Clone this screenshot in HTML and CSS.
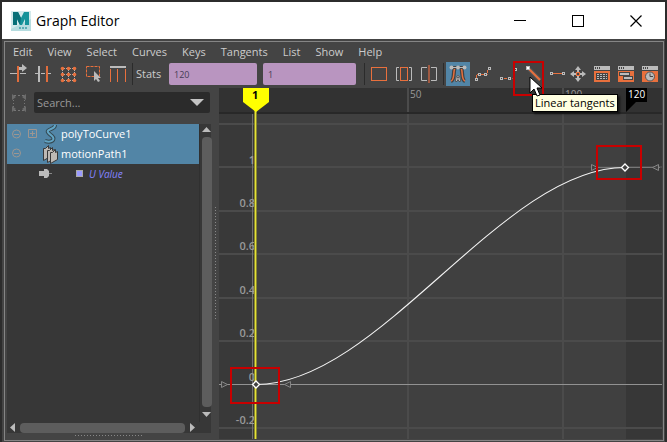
FILE: index.html
```html
<!DOCTYPE html>
<html lang="en">
<head>
<meta charset="utf-8">
<title>Graph Editor</title>
<link rel="stylesheet" href="styles.css">
</head>
<body>
<div class="window">
  <header class="titlebar">
    <svg class="app-logo" width="20" height="20" viewBox="0 0 20 20"><rect width="20" height="20" fill="#b5dcdf"/><path d="M0 0h20v8L0 18z" fill="#d3eaec"/><path d="M2 1h5l3 6 3-6h5v13h-4V8l-3 6H9L6 8v6H2z" fill="#14939a"/><path d="M2 1h5l3 6-1 7-3-6v6H2z" fill="#087078"/><path d="M8 17h9" stroke="#5aaeb5" stroke-width="2" stroke-dasharray="2 1"/></svg>
    <h1>Graph Editor</h1>
    <button class="win-btn" aria-label="Minimize"><svg width="14" height="14"><path d="M1 6.500h12" stroke="#000"/></svg></button>
    <button class="win-btn" aria-label="Maximize"><svg width="14" height="14"><rect x="1.500" y="1.500" width="11" height="11" fill="none" stroke="#000"/></svg></button>
    <button class="win-btn" aria-label="Close"><svg width="14" height="14"><path d="M1.500 1.500l11 11m0-11l-11 11" stroke="#000" stroke-width="1.200"/></svg></button>
  </header>
  <div class="client">
    <nav class="menu">
      <button>Edit</button><button>View</button><button>Select</button><button>Curves</button><button>Keys</button><button>Tangents</button><button>List</button><button>Show</button><button>Help</button>
    </nav>
    <div class="toolbar">
      <div class="tools">
        <button class="tool" aria-label="Move nearest picked key"><svg viewBox="0 0 24 24"><path d="M4 11.500h7m3 0h6" stroke="#bbb"/><path d="M12 4v16" stroke="#e06c3c" stroke-width="2"/><path d="M13 5h3V2l5 4-5 4V8h-3z" fill="#bbb"/></svg></button>
        <button class="tool" aria-label="Insert keys"><svg viewBox="0 0 24 24"><path d="M4 11.500h3m3 0h4m2 0h4" stroke="#bbb"/><path d="M8 4v16" stroke="#bbb" stroke-width="2"/><path d="M16 4v16" stroke="#e06c3c" stroke-width="2"/></svg></button>
        <button class="tool" aria-label="Lattice deform keys"><svg viewBox="0 0 24 24"><path d="M6 6.500h12M6 12.500h12M6 18.500h12M6.500 6v12M12.500 6v12M18.500 6v12" stroke="#bbb" stroke-dasharray="1 1"/><g fill="#e8703d"><circle cx="6.500" cy="6.500" r="1.800"/><circle cx="12.500" cy="6.500" r="1.800"/><circle cx="18.500" cy="6.500" r="1.800"/><circle cx="6.500" cy="12.500" r="1.800"/><circle cx="12.500" cy="12.500" r="1.800"/><circle cx="18.500" cy="12.500" r="1.800"/><circle cx="6.500" cy="18.500" r="1.800"/><circle cx="12.500" cy="18.500" r="1.800"/><circle cx="18.500" cy="18.500" r="1.800"/></g></svg></button>
        <button class="tool" aria-label="Region select"><svg viewBox="0 0 24 24"><rect x="5.500" y="4.500" width="13" height="10" fill="none" stroke="#e8703d" stroke-dasharray="3 1"/><path d="M13 9v10l2-2 2 3 2-1-2-3h3z" fill="#bbb"/></svg></button>
        <button class="tool" aria-label="Retime"><svg viewBox="0 0 24 24"><path d="M4 5h16" stroke="#bbb" stroke-width="2"/><path d="M4.500 7v13M11.500 7v13M19.500 7v13" stroke="#e8703d"/></svg></button>
      </div>
      <span class="sep"></span>
      <label class="stats" for="frame">Stats</label>
      <input class="stat" id="frame" value="120">
      <input class="stat" aria-label="Key value" value="1">
      <span class="sep sep-wide"></span>
      <div class="tools">
        <button class="tool" aria-label="Frame all"><svg viewBox="0 0 24 24"><rect x="4.500" y="5.500" width="15" height="13" fill="none" stroke="#e8703d"/></svg></button>
        <button class="tool" aria-label="Frame playback range"><svg viewBox="0 0 24 24"><path d="M7 5.500H4.500v13H7M17 5.500h2.500v13H17" fill="none" stroke="#bbb"/><rect x="8.500" y="5.500" width="7" height="13" fill="none" stroke="#e8703d"/></svg></button>
        <button class="tool" aria-label="Center current time"><svg viewBox="0 0 24 24"><path d="M10 5.500H4.500v13H10M14 5.500h5.500v13H14" fill="none" stroke="#bbb"/><path d="M12 3v18" stroke="#a05a42" stroke-width="2"/></svg></button>
      </div>
      <span class="sep sep-mid"></span>
      <div class="tools">
        <button class="tool active" aria-label="Auto tangents"><svg viewBox="0 0 24 24"><path d="M5 19c4-1 2-11 4-13M19 19c-4-1-2-11-4-13" fill="none" stroke="#424242" stroke-width="4"/><path d="M5 19c4-1 2-11 4-13M19 19c-4-1-2-11-4-13" fill="none" stroke="#e8703d" stroke-width="1.500"/><path d="M5 5.500h14" stroke="#444" stroke-width="3"/><path d="M5 5.500h14" stroke="#bbb"/><g fill="#bbb"><circle cx="5.500" cy="5.500" r="2"/><circle cx="12" cy="5.500" r="2"/><circle cx="18.500" cy="5.500" r="2"/></g><path d="M9.500 19.500c0-8 5-8 5 0h-1.500l-1-2-1 2z" fill="#bbb" stroke="#555"/><circle cx="12" cy="15.500" r="1" fill="#555"/></svg></button>
        <button class="tool" aria-label="Spline tangents"><svg viewBox="0 0 24 24"><path d="M5.500 16v-3.500h11V8" fill="none" stroke="#e8703d" stroke-dasharray="3 1"/><g fill="#444" stroke="#bbb"><rect x="4.500" y="16.500" width="2" height="2"/><rect x="7.500" y="11.500" width="2" height="2"/><rect x="13.500" y="11.500" width="2" height="2"/><rect x="17.500" y="5.500" width="2" height="2"/></g></svg></button>
        <button class="tool" aria-label="Clamped tangents"><svg viewBox="0 0 24 24"><path d="M4 16.500h12.500M17.500 15V8" fill="none" stroke="#e8703d" stroke-dasharray="3 1"/><g fill="#444" stroke="#bbb"><rect x="4.500" y="15.500" width="2" height="2"/><rect x="12.500" y="15.500" width="2" height="2"/><rect x="18.500" y="6.500" width="2" height="2"/></g></svg></button>
        <button class="tool" aria-label="Linear tangents"><svg viewBox="0 0 24 24"><path d="M8 7l11 11" stroke="#555" stroke-width="4"/><path d="M8 7l11 11" stroke="#e8703d" stroke-width="2"/><rect x="5.500" y="4.500" width="3" height="3" fill="#fff" stroke="#bbb"/></svg>
          <svg class="cursor" width="14" height="21" viewBox="0 0 14 21"><path d="M1 1v16l4-4 3 7 3-1-3-7h5z" fill="#fff" stroke="#000"/></svg>
          <span class="tooltip" role="tooltip">Linear tangents</span>
          <span class="mark mark-tool"></span>
        </button>
        <button class="tool narrow" aria-label="Flat tangents"><svg viewBox="0 0 20 24"><path d="M7 11.500h9" stroke="#e8703d"/><g fill="#444" stroke="#bbb"><rect x="4.500" y="10.500" width="2" height="2"/><rect x="16.500" y="10.500" width="2" height="2"/></g></svg></button>
      </div>
      <div class="tools tight">
        <button class="tool" aria-label="Break tangents"><svg viewBox="0 0 24 24"><path d="M12 4l3 4h-2v2h-2V8H9zM12 20l3-4h-2v-2h-2v2H9zM4 12l4-3v2h2v2H8v2zM20 12l-4-3v2h-2v2h2v2z" fill="#bbb"/><rect x="10.500" y="10.500" width="3" height="3" fill="#444" stroke="#e8703d"/></svg></button>
        <button class="tool" aria-label="Dope sheet"><svg viewBox="0 0 24 24"><path d="M4 4h16v4H4z" fill="#bbb"/><path d="M5 6h6" stroke="#444" stroke-width="2" stroke-dasharray="1 1"/><path d="M4 9h16v11H4z" fill="#e8703d"/><path d="M6 11h12v7H6z" fill="#444"/><path d="M7 12.500h10M7 14.500h10M7 16.500h10" stroke="#bbb" stroke-dasharray="2 1"/></svg></button>
        <button class="tool" aria-label="Trax editor"><svg viewBox="0 0 24 24"><path d="M4 4h16v4H4z" fill="#bbb"/><path d="M5 6h6" stroke="#444" stroke-width="2" stroke-dasharray="1 1"/><path d="M4 9h16v11H4z" fill="#e8703d"/><g fill="#bbb" stroke="#444"><rect x="5.500" y="10.500" width="10" height="3"/><rect x="9.500" y="14.500" width="9" height="3"/></g></svg></button>
        <button class="tool" aria-label="Time editor"><svg viewBox="0 0 24 24"><path d="M4 4h16v4H4z" fill="#bbb"/><path d="M5 6h6" stroke="#444" stroke-width="2" stroke-dasharray="1 1"/><path d="M4 9h16v11H4z" fill="#e8703d"/><circle cx="12" cy="14.500" r="4.500" fill="#bbb" stroke="#555"/><path d="M12 11.500v3h3" fill="none" stroke="#444"/></svg></button>
      </div>
    </div>
    <main class="main">
      <section class="outliner">
        <div class="search-row">
          <svg width="16" height="18" viewBox="0 0 16 18" fill="none" stroke="#777"><path d="M3 1.500h10M3 16.500h10" stroke-dasharray="2 2"/><path d="M2.500 3v12M13.500 3v12" stroke-dasharray="1 2"/><path d="M1 0l4 3-4 3zM15 0v6l-4-3zM1 12l4 3-4 3zM15 12v6l-4-3z" fill="#6c6c6c" stroke="none"/></svg>
          <div class="search"><input aria-label="Search" placeholder="Search..."><button aria-label="Search options"><svg width="14" height="7"><path d="M0 0h14L7 7z" fill="#c4c4c4"/></svg></button></div>
        </div>
        <div class="tree-box">
          <ul class="tree">
            <li class="row selected">
              <svg width="54" height="20" fill="none"><g stroke="#9d9691"><circle cx="9.500" cy="10" r="4"/><path d="M7 10.500h5M21.500 5.500h8v8h-8zM23 9.500h5M25.500 7v5"/></g><path d="M38 17c6 2 11-1 7-5-5-4-6-5-1-7 3-1 4-2 4-4" stroke="#354850" stroke-width="4"/><path d="M38 17c6 2 11-1 7-5-5-4-6-5-1-7 3-1 4-2 4-4" stroke="#62a5c5" stroke-width="2"/></svg>
              <span>polyToCurve1</span>
            </li>
            <li class="row selected">
              <svg width="54" height="20" fill="none"><g stroke="#9d9691"><circle cx="9.500" cy="9" r="4"/><path d="M7 9.500h5"/></g><g fill="#bdb9b4" stroke="#383838"><path d="M36.500 4.500h2l3-3v3l2-1v9l-7 4z"/><path d="M40.500 6.500h2l3-3v3l2-1v9l-7 4z"/><path d="M43.500 8.500h2l3-3v3l2-1v8l-7 4z"/></g></svg>
              <span>motionPath1</span>
            </li>
            <li class="row channel">
              <svg width="82" height="20"><path d="M32 7h5V5h3l2 2v5l-2 2h-3v-2h-5zM42 9h3v1h-3z" fill="#bbb"/><path d="M42 9.500h3" stroke="#888"/><rect x="69.500" y="6.500" width="6" height="6" fill="#9a9aff" stroke="#aaa"/></svg>
              <span>U Value</span>
            </li>
          </ul>
          <div class="vscroll"><svg width="9" height="5"><path d="M0 5l4.500-5L9 5z" fill="#bbb"/></svg><span class="thumb"></span><svg width="9" height="5"><path d="M0 0l4.500 5L9 0z" fill="#bbb"/></svg></div>
          <div class="hscroll"><svg width="5" height="9"><path d="M5 0L0 4.500 5 9z" fill="#bbb"/></svg><span class="thumb"></span><svg width="5" height="9"><path d="M0 0l5 4.500L0 9z" fill="#bbb"/></svg></div>
        </div>
        <div class="grip-h"></div>
      </section>
      <div class="splitter"><span class="grip-v"></span></div>
      <section class="graph">
        <svg class="plot" width="100%" height="100%">
          <rect width="100%" height="100%" fill="#404040"/>
          <rect width="37" height="100%" fill="#393939"/>
          <rect x="407" width="100%" height="100%" fill="#373737"/>
          <rect width="100%" height="24" fill="#323232"/>
          <rect y="24" width="100%" height="2" fill="#282828"/>
          <g class="grid">
            <path d="M189 0v24M344 0v24M189 26v900M344 26v900M0 36h2000M0 79h2000M0 123h2000M0 166h2000M0 210h2000M0 253h2000M0 340h2000"/>
          </g>
          <path d="M33.500 26v900" stroke="#707070"/>
          <path d="M0 296.500h2000" stroke="#929292"/>
          <path d="M376 79.500h65" stroke="#777"/>
          <g class="values" text-anchor="end"><text x="36" y="76">1</text><text x="36" y="119">0.8</text><text x="36" y="162">0.6</text><text x="36" y="206">0.4</text><text x="36" y="249">0.2</text><text x="36" y="293">0</text><text x="36" y="336">-0.2</text></g>
          <g class="times"><text x="191" y="10">50</text><text x="346" y="10">100</text></g>
          <g fill="#404040" stroke="#858585"><path d="M2.500 293.500l6 3-6 3zM71.500 293.500l-6 3 6 3zM372.500 76.500l6 3-6 3zM439.500 76.500l-6 3 6 3z"/></g>
          <path d="M36.500 22v900" stroke="#8a8830" stroke-width="3"/>
          <path d="M36.500 22v900" stroke="#e6e336"/>
          <path d="M37 296.500C160 296.500 283 79.500 406 79.500" fill="none" stroke="#f4f4f4" stroke-width="1.100"/>
          <g fill="#404040" stroke="#fff" stroke-width="1.300"><path d="M37 293l3.500 3.500L37 300l-3.500-3.500zM406 76l3.500 3.500L406 83l-3.500-3.500z"/></g>
          <path d="M24 0h26v14L37 24 24 14z" fill="#ff0"/>
          <text class="now" x="33" y="11">1</text>
          <path d="M407 0h21v14h-11l-10 10z" fill="#000"/>
          <text class="end" x="409" y="10">120</text>
          <g fill="none" stroke="#c80000" stroke-width="2"><rect x="12" y="280" width="48" height="35"/><rect x="378" y="58" width="44" height="33"/></g>
        </svg>
      </section>
    </main>
  </div>
</div>
</body>
</html>
```
FILE: styles.css
```css
* { box-sizing: border-box; }
body {
  margin: 0;
  height: 100vh;
  padding: 2px 2px 0;
  overflow: hidden;
  background: #2c2c2c;
  color: #ccc;
  font: 11px/16px "Open Sans", "Noto Sans", sans-serif;
}
button, input { font: inherit; color: inherit; border: 0; padding: 0; background: none; }
button { display: block; }
svg { display: block; flex: none; }
.window { height: 100%; display: flex; flex-direction: column; background: #444; padding-bottom: 1px; }
.titlebar { height: 37px; flex: none; display: flex; align-items: center; background: #fff; color: #000; }
.app-logo { margin: 0 5px 0 9px; }
.titlebar h1 { flex: 1; margin: 0; font-size: 14px; line-height: 20px; font-weight: 400; }
.win-btn { width: 58px; height: 36px; display: grid; place-items: center; }
.client { flex: 1; min-height: 0; margin: 2px 1px 0 2px; border: 1px solid #858585; display: flex; flex-direction: column; }
.menu { height: 20px; flex: none; display: flex; align-items: center; gap: 15px; padding-left: 8px; }
.toolbar { height: 24px; flex: none; display: flex; align-items: center; padding-left: 1px; }
.tools { display: flex; gap: 1px; flex: none; }
.tight { gap: 0; }
.tool { position: relative; width: 24px; height: 24px; flex: none; }
.tool > svg:first-child { width: 100%; height: 24px; }
.narrow { width: 20px; }
.active { background: #5285a6; }
.sep { width: 1px; height: 22px; margin: 0 3px 0 2px; background: #2b2b2b; flex: none; }
.sep-wide { margin-left: 8px; margin-right: 2px; }
.sep-mid { margin-right: 2px; }
.stats { width: 33px; flex: none; }
.stat { width: 88px; height: 22px; min-width: 0; padding-left: 5px; border-radius: 2px; background: #b995c0; color: #453d55; font-size: 9px; }
.stat + .stat { width: 93px; margin-left: 6px; }
.cursor { position: absolute; left: 8px; top: 14px; z-index: 3; }
.tooltip { position: absolute; left: 11px; top: 32px; z-index: 2; padding: 0 2px; border: 1px solid #000; background: #ffffe1; color: #000; white-space: nowrap; box-shadow: 2px 2px 2px #0009; }
.mark { position: absolute; border: 2px solid #c80000; }
.mark-tool { left: -8px; top: -1px; width: 31px; height: 35px; z-index: 1; }
.main { flex: 1; min-height: 0; display: flex; padding: 2px 1px 1px 2px; }
.outliner { width: 204px; flex: none; display: flex; flex-direction: column; padding-top: 4px; }
.search-row { display: flex; align-items: center; gap: 7px; padding: 0 1px 0 4px; margin-bottom: 11px; }
.search { flex: 1; height: 21px; display: flex; align-items: center; background: #2b2b2b; border-radius: 2px; padding: 0 6px 0 3px; }
.search input { flex: 1; min-width: 0; }
.search input::placeholder { color: #999; opacity: 1; }
.tree-box { flex: 1; min-height: 0; display: grid; grid-template: 1fr 11px / 1fr 12px; background: #373737; }
.tree { margin: 0; padding: 0; list-style: none; }
.row { height: 20px; display: flex; align-items: center; }
.selected { background: #5285a6; color: #fff; }
.channel { color: #8484ff; font-size: 10px; font-style: italic; }
.vscroll { display: flex; flex-direction: column; align-items: center; gap: 5px; padding: 3px 0 5px 2px; border-left: 1px solid #303030; }
.hscroll { display: flex; align-items: center; gap: 5px; padding: 0 4px 0 3px; }
.thumb { flex: 1; background: #5d5d5d; border-radius: 4px; }
.vscroll .thumb { width: 10px; }
.hscroll .thumb { height: 10px; }
.grip-h { width: 67px; height: 1px; margin: 2px auto 3px 68px; background: repeating-linear-gradient(90deg, #888 0 1px, transparent 1px 3px); }
.splitter { width: 8px; flex: none; display: grid; place-items: center; }
.grip-v { width: 1px; height: 114px; background: repeating-linear-gradient(#888 0 1px, transparent 1px 3px); }
.graph { flex: 1; min-width: 0; overflow: hidden; }
.grid { stroke: #4b4b4b; stroke-width: 2; }
.values { fill: #999; font-size: 11px; font-weight: 600; }
.times { fill: #999; font-size: 10px; }
.now { fill: #000; font-size: 11px; font-weight: 700; }
.end { fill: #fff; font-size: 10px; }
```
